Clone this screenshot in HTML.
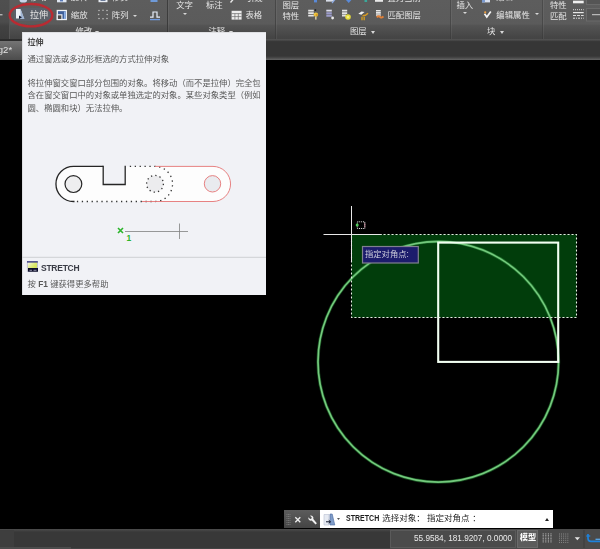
<!DOCTYPE html>
<html lang="zh-CN">
<head>
<meta charset="utf-8">
<title>AutoCAD STRETCH</title>
<style>
html,body{margin:0;padding:0;background:#000;}
body{width:600px;height:549px;position:relative;overflow:hidden;font-family:"Liberation Sans","Noto Sans CJK SC",sans-serif;}
.abs{position:absolute;}
#ribbon{left:0;top:0;width:600px;height:39px;background:linear-gradient(#5d5d5d 0,#5b5b5b 24px,#545454 25.5px,#454545 37px,#444 39px);overflow:hidden;}
#ribbon .t{position:absolute;color:#e4e4e4;font-size:8.4px;line-height:10px;white-space:nowrap;filter:blur(.3px);}
#ribbon .sep{position:absolute;top:0;width:1px;height:39px;background:linear-gradient(#4c4c4c 0,#484848 24px,#3c3c3c 39px);box-shadow:1px 0 0 rgba(255,255,255,.06);}
#ribbon .arr{position:absolute;width:0;height:0;border-left:2.2px solid transparent;border-right:2.2px solid transparent;border-top:2.6px solid #d8d8d8;}
#ribbon .arr.b{border-left-width:2.7px;border-right-width:2.7px;border-top-width:3px;margin-left:-.5px;}
#tabbar{left:0;top:39px;width:600px;height:21.4px;background:linear-gradient(#4b4b4b 0,#535353 .8px,#3c3c3c 2px,#363636 2.8px,#363636 17px,#4a4a4a 19px,#606060 20.4px,#505050 21.4px);}
#canvas{left:0;top:60px;width:600px;height:468px;background:#000;}
#tip{left:22px;top:32px;width:244px;height:263px;background:#f1f2f6;box-shadow:inset 1px 1px 0 #dfe0e3;color:#585858;font-size:8.33px;line-height:12.1px;}
#tip .p{position:absolute;left:5.5px;white-space:nowrap;filter:blur(.3px);}
#status{left:0;top:528px;width:600px;height:21px;background:linear-gradient(#000 0,#000 .5px,#464646 .9px,#4a4a4a 1.6px,#3e3e3e 3px,#383838 4.5px,#383838 21px);}
#cmd{left:283.5px;top:509.5px;width:269px;height:18.5px;background:linear-gradient(#5c5c5c,#444);}
</style>
</head>
<body>

<div id="ribbon" class="abs">
  <div class="abs" style="left:0;top:0;width:8.800px;height:39px;background:linear-gradient(#4f4f4f 0,#4c4c4c 22px,#424242 26px,#3c3c3c 39px);border-right:1px solid #565656;"></div>
  <div class="abs" style="left:13.5px;top:7.5px;width:37px;height:13px;background:#5b6069;"></div>
  <!-- row 1 remnants -->
  <div class="t" style="left:30px;top:-7.9px;">移动</div>
  <div class="t" style="left:70.8px;top:-7.9px;">旋转</div>
  <div class="t" style="left:111.8px;top:-7.9px;">修剪</div>
  <div class="t" style="left:246px;top:-7.1px;">引线</div>
  <div class="t" style="left:387.5px;top:-7px;">置为当前</div>
  <div class="t" style="left:496.3px;top:-7.9px;">编辑</div>
  <!-- row 2 -->
  <div class="t" style="left:30px;top:9.8px;font-size:9px;">拉伸</div>
  <div class="t" style="left:70.8px;top:9.8px;">缩放</div>
  <div class="t" style="left:111.8px;top:9.8px;">阵列</div>
  <div class="arr" style="left:133px;top:14.5px;"></div>
  <div class="t" style="left:75.5px;top:26.4px;">修改</div>
  <div class="arr b" style="left:95.500px;top:30.800px;"></div>
  <div class="sep" style="left:166.800px;background:linear-gradient(#3e3e3e,#383838);"></div>
  <div class="t" style="left:176.2px;top:-.3px;">文字</div>
  <div class="arr" style="left:182.800px;top:12.800px;"></div>
  <div class="t" style="left:206px;top:-.3px;">标注</div>
  <div class="t" style="left:245.5px;top:9.8px;">表格</div>
  <div class="t" style="left:208.5px;top:26.4px;">注释</div>
  <div class="arr b" style="left:229px;top:30.8px;"></div>
  <div class="sep" style="left:274.700px;background:linear-gradient(#484848 0,#444 24px,#3c3c3c 39px);"></div>
  <div class="t" style="left:282.5px;top:-.3px;">图层</div>
  <div class="t" style="left:282.5px;top:11.2px;">特性</div>
  <div class="t" style="left:387.5px;top:9.8px;">匹配图层</div>
  <div class="t" style="left:350px;top:26.4px;">图层</div>
  <div class="arr b" style="left:371px;top:30.8px;"></div>
  <div class="sep" style="left:449.5px;"></div>
  <div class="t" style="left:456.5px;top:-.3px;">插入</div>
  <div class="arr" style="left:463.2px;top:12.4px;"></div>
  <div class="t" style="left:496.3px;top:9.8px;">编辑属性</div>
  <div class="arr" style="left:534.5px;top:13.4px;"></div>
  <div class="t" style="left:487px;top:26.4px;">块</div>
  <div class="arr b" style="left:500.3px;top:30.8px;"></div>
  <div class="sep" style="left:541.700px;"></div>
  <div class="t" style="left:550px;top:-.3px;">特性</div>
  <div class="t" style="left:550px;top:11.4px;">匹配</div>
  <svg class="abs" style="left:0;top:0;filter:blur(.3px);" width="600" height="39" viewBox="0 0 600 39">
    <defs><filter id="ib"><feGaussianBlur stdDeviation=".45"/></filter></defs>
    <!-- left dash -->
    <path d="M0 14.8h2.5" stroke="#ddd" stroke-width="1"/>
    <!-- row1 remnants -->
    <path d="M19.5 0a3.8 2.6 0 0 0 7.6 0z" fill="#c8d4e8"/>
    <rect x="57" y="-2" width="9.5" height="4.3" fill="#dfe6f2"/><rect x="60" y="-2" width="3" height="3.4" fill="#5a7ab8"/>
    <rect x="98.5" y="-2" width="9" height="4.2" fill="#e8ecf2"/><rect x="100.5" y="-2" width="5" height="3" fill="#6a7a98"/>
    <rect x="150.5" y="-2" width="7" height="4" fill="#6f9ad8"/>
    <path d="M230.5 2.5l2.5-3" stroke="#e8e8e8" stroke-width="1.4"/>
    <rect x="314" y="-1" width="3" height="3.4" fill="#5a8ad8"/>
    <rect x="326" y="-1" width="8" height="2.6" fill="#d8dde8"/><path d="M332 3l3-3.5" stroke="#8aa8e0" stroke-width="1.2"/>
    <path d="M346 0l2.7 3 2.7-3z" fill="#5a8ad8"/>
    <rect x="364.5" y="-1" width="2.6" height="3" fill="#3aa89a"/>
    <rect x="375" y="-1" width="8" height="2.8" fill="#e8e8e8"/>
    <rect x="482" y="-1" width="8" height="3.4" fill="#d8e0f0"/><rect x="482" y="-1" width="3" height="3.4" fill="#7a9ad0"/>
    <!-- scale icon -->
    <rect x="57.3" y="10.5" width="9" height="9" fill="#3f5f9a"/>
    <rect x="57.3" y="10.5" width="9" height="9" fill="none" stroke="#f2f4f8" stroke-width="1.3"/>
    <rect x="57.3" y="14.8" width="4.6" height="4.7" fill="#4a4a4a" stroke="#f2f4f8" stroke-width="1.1"/>
    <path d="M64.8 11.5v7.5" stroke="#8ab0e8" stroke-width="1.6"/>
    <!-- array icon -->
    <g fill="#bdbdbd"><circle cx="99" cy="10.5" r=".8"/><circle cx="103" cy="10.2" r=".8"/><circle cx="107" cy="10.5" r=".8"/><circle cx="98.6" cy="14.5" r=".8"/><circle cx="107.2" cy="14.5" r=".8"/><circle cx="99" cy="18.5" r=".8"/><circle cx="103" cy="18.8" r=".8"/><circle cx="107" cy="18.5" r=".8"/></g>
    <!-- offset-ish icon -->
    <path d="M150 17.2h3V12h4v5.200h3" fill="none" stroke="#e8eefa" stroke-width="1.2"/>
    <path d="M150 19.6h10" stroke="#6f9ae0" stroke-width="1.3"/>
    <!-- table icon -->
    <rect x="231.600" y="10.800" width="10" height="8.800" fill="#ececec"/>
    <path d="M231.600 13.600h10M231.600 16.600h10M234.900 13.600v6M238.300 13.600v6" stroke="#6a6a6a" stroke-width=".7" fill="none"/>
    <!-- layer icons -->
    <g filter="url(#ib)">
    <path d="M308.200 10.700h5.600M308.200 13.200h5.600M308.200 15.700h5.600" stroke="#e4e4e4" stroke-width="1.800"/>
    <circle cx="315.900" cy="14.600" r="2.200" fill="#f0c840"/><circle cx="316.700" cy="14.900" r="1.200" fill="#d89a28"/>
    <rect x="315.200" y="16.600" width="1.300" height="3" fill="#efe2b0"/><rect x="314.600" y="9.300" width="1.500" height="1.600" fill="#1a1a1a"/>
    <path d="M326.300 10.600h5.500" stroke="#dcdcec" stroke-width="1.800"/>
    <path d="M326.300 13.200h5.500M326.300 15.800h5.500" stroke="#9c9cca" stroke-width="1.900"/>
    <circle cx="332.600" cy="18" r="1.400" fill="#ececec"/>
    <path d="M342 10.600h5.200M342 13.100h5.200M342 15.500h4" stroke="#e2e2e2" stroke-width="1.800"/>
    <circle cx="348" cy="17" r="2.800" fill="#e6dc3c"/><circle cx="348" cy="17" r="1.300" fill="#f4f080"/>
    <path d="M358.300 13.700l3.200-2.200 3 .6-3.200 2.600z" fill="#f4f4f4"/>
    <path d="M362 16.800v3.500M364.200 16.800v3.500" stroke="#d8a020" stroke-width="1.300" fill="none"/>
    <path d="M362.500 15.800q3.500 0 5.500-2.500" stroke="#d89a20" stroke-width="1.500" fill="none"/>
    <path d="M376 10.700h4.800M376 12.900h4.800M376 15h4.800" stroke="#e6e6e6" stroke-width="1.600"/>
    <path d="M376.700 17.300q2-1.800 3.500-.3t3.200-.6" stroke="#e08038" stroke-width="1.900" fill="none"/>
    </g>
    <!-- edit attribute icon -->
    <path d="M484.500 13.800l2.300 3.200 4-5.500" stroke="#f4f4f4" stroke-width="1.700" fill="none"/>
    <circle cx="485.200" cy="12.300" r="1.100" fill="#f0a040"/>
    <!-- linetype icons -->
    <rect x="573" y="0.700" width="10.700" height="2.600" fill="#f0f0f0"/>
    <path d="M573 9.700h10.700" stroke="#dcdcdc" stroke-width="1" stroke-dasharray="1 1"/>
    <path d="M573 12.600h10.700" stroke="#e8e8e8" stroke-width="1.200"/>
    <path d="M573 15.500h10.700" stroke="#dcdcdc" stroke-width="1" stroke-dasharray="3 1"/>
    <path d="M573 18.200h10.700" stroke="#dcdcdc" stroke-width="1" stroke-dasharray="2 1 1 1"/>
    <!-- combos -->
    <rect x="586.500" y="-1" width="15" height="5.500" fill="#555" stroke="#6a6a6a" stroke-width="1"/>
    <rect x="586.500" y="8.500" width="15" height="12.500" fill="#555" stroke="#6a6a6a" stroke-width="1"/>
    <path d="M592 14.700h8" stroke="#cfcfcf" stroke-width="1"/>
  </svg>
</div>

<div id="tabbar" class="abs">
  <div class="abs" style="left:0;top:0;width:40px;height:1.5px;background:#2c2c2c;"></div>
  <div class="abs" style="left:0;top:1.5px;width:40px;height:19.5px;background:linear-gradient(#747474,#4c4c4c);"></div>
  <div class="abs" style="left:-2.200px;top:6px;color:#e4e4e4;font-size:9.500px;line-height:10px;filter:blur(.3px);">g2*</div>
</div>

<div id="canvas" class="abs"></div>

<svg class="abs" style="left:0;top:0;" width="600" height="549" viewBox="0 0 600 549">
  <defs><filter id="gl" x="-10%" y="-10%" width="120%" height="120%"><feGaussianBlur stdDeviation="1.2"/></filter>
  <filter id="gl2" x="-10%" y="-10%" width="120%" height="120%"><feGaussianBlur stdDeviation=".7"/></filter>
  <filter id="sb"><feGaussianBlur stdDeviation=".35"/></filter></defs>
  <!-- selection window -->
  <rect x="351.5" y="234.5" width="225" height="83" fill="#013d0b"/>
  <!-- circle -->
  <circle cx="438.300" cy="361.800" r="120.300" fill="none" stroke="#2c8a3a" stroke-width="3.200" opacity=".5" filter="url(#gl2)"/>
  <circle cx="438.300" cy="361.800" r="120.300" fill="none" stroke="#5fba6a" stroke-width="1.800" filter="url(#sb)"/>
  <circle cx="438.300" cy="361.800" r="120.300" fill="none" stroke="#a6e6aa" stroke-width=".7" opacity=".55" filter="url(#sb)"/>
  <!-- rect -->
  <rect x="438.200" y="242.600" width="120" height="119.300" fill="none" stroke="#f2fff2" stroke-width="2.100" filter="url(#sb)"/>
  <rect x="351.5" y="234.5" width="225" height="83" fill="none" stroke="#e4efe4" stroke-width="1.1" stroke-dasharray="2.1 1.9"/>
  <!-- crosshair -->
  <path d="M323.5 234.5H381.5M351.5 206V262" stroke="#e8e8e8" stroke-width="1" fill="none"/>
  <rect x="357.300" y="221.800" width="7.500" height="6.700" fill="none" stroke="#ddd" stroke-width="1" stroke-dasharray="1 .9"/>
  <path d="M364.800 223v4.500" stroke="#c890a0" stroke-width="1"/>
  <circle cx="357.200" cy="225.100" r="1.500" fill="#4fc85a"/>
  <!-- dynamic prompt -->
  <rect x="362.500" y="246.500" width="55.800" height="16.500" fill="#1c1c6c" stroke="#80808f" stroke-width="1.200"/>
  <text x="365" y="256.800" font-size="8.3" fill="#cdcddc" font-family="Liberation Sans, Noto Sans CJK SC, sans-serif" filter="url(#sb)">指定对角点:</text>
</svg>

<div id="tip" class="abs">
  <div class="p" style="top:5.4px;font-weight:bold;color:#444;font-size:8px;">拉伸</div>
  <div class="p" style="top:21.3px;">通过窗选或多边形框选的方式拉伸对象</div>
  <div class="p" style="top:45.3px;">将拉伸窗交窗口部分包围的对象。将移动（而不是拉伸）完全包</div>
  <div class="p" style="top:57.4px;">含在窗交窗口中的对象或单独选定的对象。某些对象类型（例如</div>
  <div class="p" style="top:69.5px;">圆、椭圆和块）无法拉伸。</div>
  <svg class="abs" style="left:0;top:0;" width="244" height="263" viewBox="22 32 244 263">
    <defs><filter id="tb"><feGaussianBlur stdDeviation=".3"/></filter></defs>
    <!-- shape fill -->
    <path d="M73.500 166.400H103.200V184.500H125.200V166.400H213A17.500 17.500 0 0 1 213 201.500H73.500A17.500 17.500 0 0 1 73.500 166.400Z" fill="#fdfdfd"/>
    <circle cx="73.400" cy="184.100" r="8.400" fill="#eeeeef"/>
    <circle cx="155" cy="183.800" r="8.400" fill="#ececee"/>
    <circle cx="212.500" cy="183.800" r="8.200" fill="#e9ebef"/>
    <!-- black part -->
    <path d="M103.200 166.400H73.500A17.550 17.550 0 0 0 73.500 201.500H74.500" fill="none" stroke="#262626" stroke-width="1.300"/>
    <path d="M103.200 165.800V184.500H125.200V165.800" fill="none" stroke="#262626" stroke-width="1.300"/>
    <circle cx="73.400" cy="184.100" r="8.400" fill="none" stroke="#262626" stroke-width="1.200"/>
    <!-- dotted part -->
    <path d="M129.800 166.400H155A17.500 17.500 0 0 1 155 201.500H74" fill="none" stroke="#333" stroke-width="1.300" stroke-dasharray="1.300 3.600"/>
    <circle cx="155" cy="183.800" r="8.400" fill="none" stroke="#333" stroke-width="1.300" stroke-dasharray="1.300 3.100"/>
    <!-- red part -->
    <path d="M155 166.400H213A17.500 17.500 0 0 1 213 201.500H142" fill="none" stroke="#e47474" stroke-width=".9"/>
    <circle cx="212.500" cy="183.800" r="8.200" fill="none" stroke="#e47474" stroke-width=".9"/>
    <!-- cursor line -->
    <path d="M125 231.5H188M179.5 223.5V239" stroke="#808080" stroke-width=".8" fill="none"/>
    <path d="M118 228l5 5M123 228l-5 5" stroke="#2bb52b" stroke-width="1.6" fill="none"/>
    <text x="126.500" y="240.800" font-size="8.500" font-weight="bold" fill="#2bb52b" font-family="Liberation Sans, sans-serif">1</text>
    <!-- separator -->
    <path d="M22 257.300H266" stroke="#cfd0d4" stroke-width="1"/>
    <!-- stretch icon -->
    <defs><linearGradient id="yg" x1="0" y1="0" x2="1" y2="1"><stop offset="0" stop-color="#fbfbf6"/><stop offset=".55" stop-color="#dbe86a"/><stop offset="1" stop-color="#c8d850"/></linearGradient></defs>
    <g filter="url(#tb)">
    <rect x="27.300" y="261.500" width="10.200" height="9.800" fill="url(#yg)" stroke="#b8b8d8" stroke-width=".8"/>
    <rect x="27" y="261.200" width="10.800" height="1.400" fill="#3c3c80"/>
    <rect x="28" y="268" width="10" height="3.700" fill="#10102c"/>
    <path d="M29.500 270.300h2.500M33.500 270.300h3" stroke="#c8c8e0" stroke-width=".7"/>
    </g>
  </svg>
  <div class="p" style="left:19px;top:230px;font-weight:bold;color:#3a3c46;font-size:8.5px;letter-spacing:-.25px;">STRETCH</div>
  <div class="p" style="top:245.5px;">按 <b>F1</b> 键获得更多帮助</div>
</div>

<!-- red highlight ellipse + stretch icon -->
<svg class="abs" style="left:0;top:0;" width="80" height="40" viewBox="0 0 80 40">
  <defs><filter id="eb"><feGaussianBlur stdDeviation=".35"/></filter></defs>
  <path d="M16 9h4.5l3.5 9.5h-8z" fill="#eef2f8"/>
  <path d="M20.5 9l4 10h-4z" fill="#9fb4d4"/>
  <path d="M19 15.5l3 1.8-3 1.8z" fill="#101830"/>
  <ellipse cx="31" cy="15.200" rx="21.300" ry="11.200" fill="none" stroke="#c4262e" stroke-width="2.400" opacity=".9" filter="url(#eb)"/>
</svg>

<div id="cmd" class="abs">
  <svg class="abs" style="left:0;top:0;" width="60" height="19" viewBox="283.5 509.5 60 19">
    <path d="M286.5 513.5V525M288 513.5V525M289.5 513.5V525" stroke="#808080" stroke-width=".8" stroke-dasharray="1 1" fill="none"/>
    <path d="M294.800 516.700l5 5M299.800 516.700l-5 5" stroke="#eeeeee" stroke-width="1.300" fill="none"/>
    <path d="M309.5 515.2a2.6 2.6 0 0 1 3.3 3.3l3.6 4.2-1.4 1.3-3.8-4a2.6 2.6 0 0 1-3.3-3.2l1.7 1.6 1.4-.3.2-1.4z" fill="#f0f0f0"/>
  </svg>
  <div class="abs" style="left:36.5px;top:.5px;width:232.5px;height:18px;background:#fff;"></div>
  <svg class="abs" style="left:36.5px;top:0;" width="30" height="19" viewBox="320 509.5 30 19">
    <path d="M324 514h5l0 10.5h-5z" fill="#e6eaf2" stroke="#b8c0d0" stroke-width=".6"/>
    <path d="M330 513.5h2.2l2.6 11h-4.8z" fill="#7f9cc8" stroke="#4a6aa0" stroke-width=".6"/>
    <path d="M326 521.3h4M328.8 519.8l1.8 1.5-1.8 1.5" stroke="#10182c" stroke-width="1" fill="none"/>
    <path d="M337 517.6h3l-1.5 1.8z" fill="#555"/>
  </svg>
  <div class="abs" style="left:62px;top:3.8px;color:#1e1e1e;font-size:8.5px;line-height:11px;white-space:nowrap;filter:blur(.25px);"><b style="display:inline-block;font-size:8.3px;transform:scaleX(.85);transform-origin:0 50%;margin-right:-4.8px;">STRETCH</b> 选择对象： 指定对角点<span style="margin-left:2.5px">：</span></div>
  <div class="abs" style="left:261.200px;top:8px;width:0;height:0;border-left:2.5px solid transparent;border-right:2.5px solid transparent;border-bottom:3.3px solid #222;"></div>
</div>

<div id="status" class="abs">
  <div class="abs" style="left:0;top:18.600px;width:70.500px;height:3px;background:#4c4c4c;"></div>
  <div class="abs" style="left:70.500px;top:19.800px;width:320px;height:1.200px;background:#434343;"></div>
  <div class="abs" style="left:0;top:2px;width:14.400px;height:16.500px;background:#3e3e3e;"></div>
  <div class="abs" style="left:389.800px;top:1.200px;width:211px;height:19.800px;background:#4a4a4a;"></div>
  <div class="abs" style="left:389.800px;top:2px;width:126.700px;height:17.500px;background:#4b4b4b;border:1px solid #5a5a5a;box-sizing:border-box;"></div>
  <div class="abs" style="left:414.300px;top:5.400px;color:#ececec;font-size:9.600px;line-height:10px;white-space:nowrap;filter:blur(.25px);transform:scaleX(.855);transform-origin:0 50%;">55.9584, 181.9207, 0.0000</div>
  <div class="abs" style="left:516.500px;top:2px;width:21px;height:17.500px;background:#5c5c5c;border:1px solid #6a6a6a;box-sizing:border-box;"></div>
  <div class="abs" style="left:519.8px;top:5.2px;color:#fff;font-size:8.2px;line-height:10px;font-weight:bold;white-space:nowrap;filter:blur(.3px);">模型</div>
  <svg class="abs" style="left:538px;top:0;filter:blur(.25px);" width="62" height="21" viewBox="538 528 62 21">
    <path d="M543.200 533.300v9.200M545.800 533.300v9.200M548.400 533.300v9.200M551 533.300v9.200" stroke="#a4a4a4" stroke-width="1.100" stroke-dasharray="1.100 .5" fill="none"/>
    <path d="M559 534h9.800M559 536.100h9.800M559 538.200h9.800M559 540.300h9.800M559 542.400h9.800" stroke="#9a9a9a" stroke-width=".9" stroke-dasharray=".9 1.200" fill="none"/>
    <path d="M574.700 537.200h5.300l-2.650 3.100z" fill="#e6e6e6"/>
    <path d="M584 530v18" stroke="#3a3a3a" stroke-width="1"/>
    <path d="M588 534v4.500q0 2.800 3 2.800h9" stroke="#1e82dc" stroke-width="1.700" fill="none"/>
    <path d="M586.300 536h4" stroke="#1e82dc" stroke-width="1.300" fill="none"/>
    <path d="M595.500 539.300h4.500" stroke="#58a8ec" stroke-width="1.300" fill="none"/>
  </svg>
</div>

</body>
</html>
